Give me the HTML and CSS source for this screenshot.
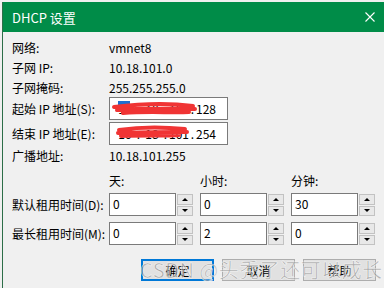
FILE: index.html
```html
<!DOCTYPE html>
<html lang="zh-CN">
<head>
    <meta charset="UTF-8">
    <title>DHCP 设置</title>
    <link rel="stylesheet" href="styles.css">
</head>
<body>
    <div class="window">
        <div class="titlebar">
            <span class="title">DHCP 设置</span>
            <svg class="close" width="10" height="10" viewBox="0 0 10 10">
                <path d="M0.5 0.5 L9.5 9.5 M9.5 0.5 L0.5 9.5" stroke="#fff" stroke-width="1.1" fill="none"/>
            </svg>
        </div>

        <div class="content">
            <div class="info">
                <div class="row"><span class="label">网络:</span><span>vmnet8</span></div>
                <div class="row"><span class="label">子网 IP:</span><span>10.18.101.0</span></div>
                <div class="row"><span class="label">子网掩码:</span><span>255.255.255.0</span></div>
                <div class="row field-row">
                    <span class="label">起始 IP 地址(S):</span>
                    <div class="ipbox">
                        <span class="oct">10</span><span class="dot">.</span>
                        <span class="oct">18</span><span class="dot">.</span>
                        <span class="oct">101</span><span class="dot">.</span>
                        <span class="oct">128</span>
                        <svg class="redact" width="117" height="23" viewBox="0 0 117 23">
                            <rect x="9" y="4" width="12" height="6" fill="#1e6fd0"/>
                            <path d="M5 10 C30 7 60 6 84 9 M8 13 C35 11 60 12 86 12 M14 16 C40 14 62 16 80 15"
                                  stroke="#f03434" stroke-width="4" stroke-linecap="round" fill="none"/>
                        </svg>
                    </div>
                </div>
                <div class="row field-row second">
                    <span class="label">结束 IP 地址(E):</span>
                    <div class="ipbox">
                        <span class="oct">10</span><span class="dot">.</span>
                        <span class="oct">18</span><span class="dot">.</span>
                        <span class="oct">101</span><span class="dot">.</span>
                        <span class="oct">254</span>
                        <svg class="redact" width="117" height="23" viewBox="0 0 117 23">
                            <path d="M10 8 C30 5 55 5 76 7 M9 11 C30 10 55 10 78 10 M12 14 C35 13 55 14 70 13"
                                  stroke="#f03434" stroke-width="4" stroke-linecap="round" fill="none"/>
                        </svg>
                    </div>
                </div>
                <div class="row"><span class="label">广播地址:</span><span>10.18.101.255</span></div>
            </div>

            <div class="lease">
                <span></span>
                <span class="head">天:</span>
                <span class="head">小时:</span>
                <span class="head">分钟:</span>

                <span class="label">默认租用时间(D):</span>
                <div class="spin"><div class="num">0</div><div class="arrows"><span class="up"></span><span class="down"></span></div></div>
                <div class="spin"><div class="num">0</div><div class="arrows"><span class="up"></span><span class="down"></span></div></div>
                <div class="spin"><div class="num">30</div><div class="arrows"><span class="up"></span><span class="down"></span></div></div>

                <span class="label">最长租用时间(M):</span>
                <div class="spin"><div class="num">0</div><div class="arrows"><span class="up"></span><span class="down"></span></div></div>
                <div class="spin"><div class="num">2</div><div class="arrows"><span class="up"></span><span class="down"></span></div></div>
                <div class="spin"><div class="num">0</div><div class="arrows"><span class="up"></span><span class="down"></span></div></div>
            </div>

            <div class="buttons">
                <button class="btn default">确定</button>
                <button class="btn">取消</button>
                <button class="btn">帮助</button>
                <span class="watermark">CSDN @头秃了还可以成长</span>
            </div>
        </div>
    </div>
</body>
</html>
```

FILE: styles.css
```css
body {
    margin: 0;
    background-color: #f0f0f0;
    font-family: "Noto Sans CJK SC", sans-serif;
    font-size: 12px;
    color: #000;
    overflow: hidden;
}

.window {
    margin: 2px 0 0 2px;
    border-left: 1px solid #2d6e48;
    height: 286px;
    background-color: #f0f0f0;
}

.titlebar {
    height: 30px;
    background-color: #008c48;
    color: #fff;
    display: flex;
    align-items: center;
    justify-content: space-between;
    padding: 0 8px 0 9px;
}

.title {
    font-size: 13px;
}

.close {
    margin-right: 1px;
}

.content {
    padding: 5px 0 0 9px;
}

.row {
    display: flex;
    align-items: center;
    height: 20px;
}

.label {
    width: 97px;
    flex-shrink: 0;
}

.field-row {
    height: 23px;
}

.field-row.second {
    margin-top: 2px;
}

.ipbox {
    position: relative;
    width: 113px;
    height: 21px;
    border: 1px solid #7a7a7a;
    background-color: #fff;
    display: flex;
    align-items: center;
    padding-left: 4px;
}

.ipbox .oct {
    width: 22px;
    text-align: center;
}

.ipbox .dot {
    width: 5px;
    text-align: center;
}

.redact {
    position: absolute;
    left: -1px;
    top: -1px;
}

/* lease times: label column + three spin boxes */
.lease {
    display: grid;
    grid-template-columns: 90px 84px 84px 84px;
    grid-template-rows: 22px 23px 23px;
    column-gap: 7px;
    row-gap: 6px;
    align-items: center;
}

.lease .label {
    width: auto;
    white-space: nowrap;
}

.lease .head {
    align-self: end;
    line-height: 12px;
}

.spin {
    display: flex;
    height: 23px;
    gap: 1px;
}

.num {
    width: 62px;
    height: 21px;
    border: 1px solid #7a7a7a;
    background-color: #fff;
    padding-left: 3px;
    line-height: 19px;
}

.arrows {
    width: 16px;
    display: flex;
    flex-direction: column;
    gap: 1px;
    padding-top: 1px;
}

.arrows span {
    height: 9px;
    border: 1px solid #c2c2c2;
    background-color: #e8e8e8;
    display: flex;
    align-items: center;
    justify-content: center;
}

.arrows span::after {
    content: "";
    width: 0;
    height: 0;
    border-left: 3px solid transparent;
    border-right: 3px solid transparent;
}

.arrows .up::after {
    border-bottom: 3px solid #000;
}

.arrows .down::after {
    border-top: 3px solid #000;
}

.buttons {
    position: relative;
    display: flex;
    justify-content: flex-end;
    gap: 8px;
    padding-right: 8px;
    margin-top: 14px;
}

.btn {
    width: 73px;
    height: 22px;
    border: 1px solid #adadad;
    background-color: #e1e1e1;
    font-family: "Noto Sans CJK SC", sans-serif;
    font-size: 12px;
    color: #000;
    padding: 0;
}

.btn.default {
    border: 2px solid #0078d7;
}

.watermark {
    position: absolute;
    left: 128px;
    top: -4px;
    font-size: 20px;
    color: rgba(120, 120, 120, 0.55);
    -webkit-text-stroke: 0.6px rgba(255, 255, 255, 0.8);
    white-space: nowrap;
    pointer-events: none;
    letter-spacing: 0.5px;
}
```
